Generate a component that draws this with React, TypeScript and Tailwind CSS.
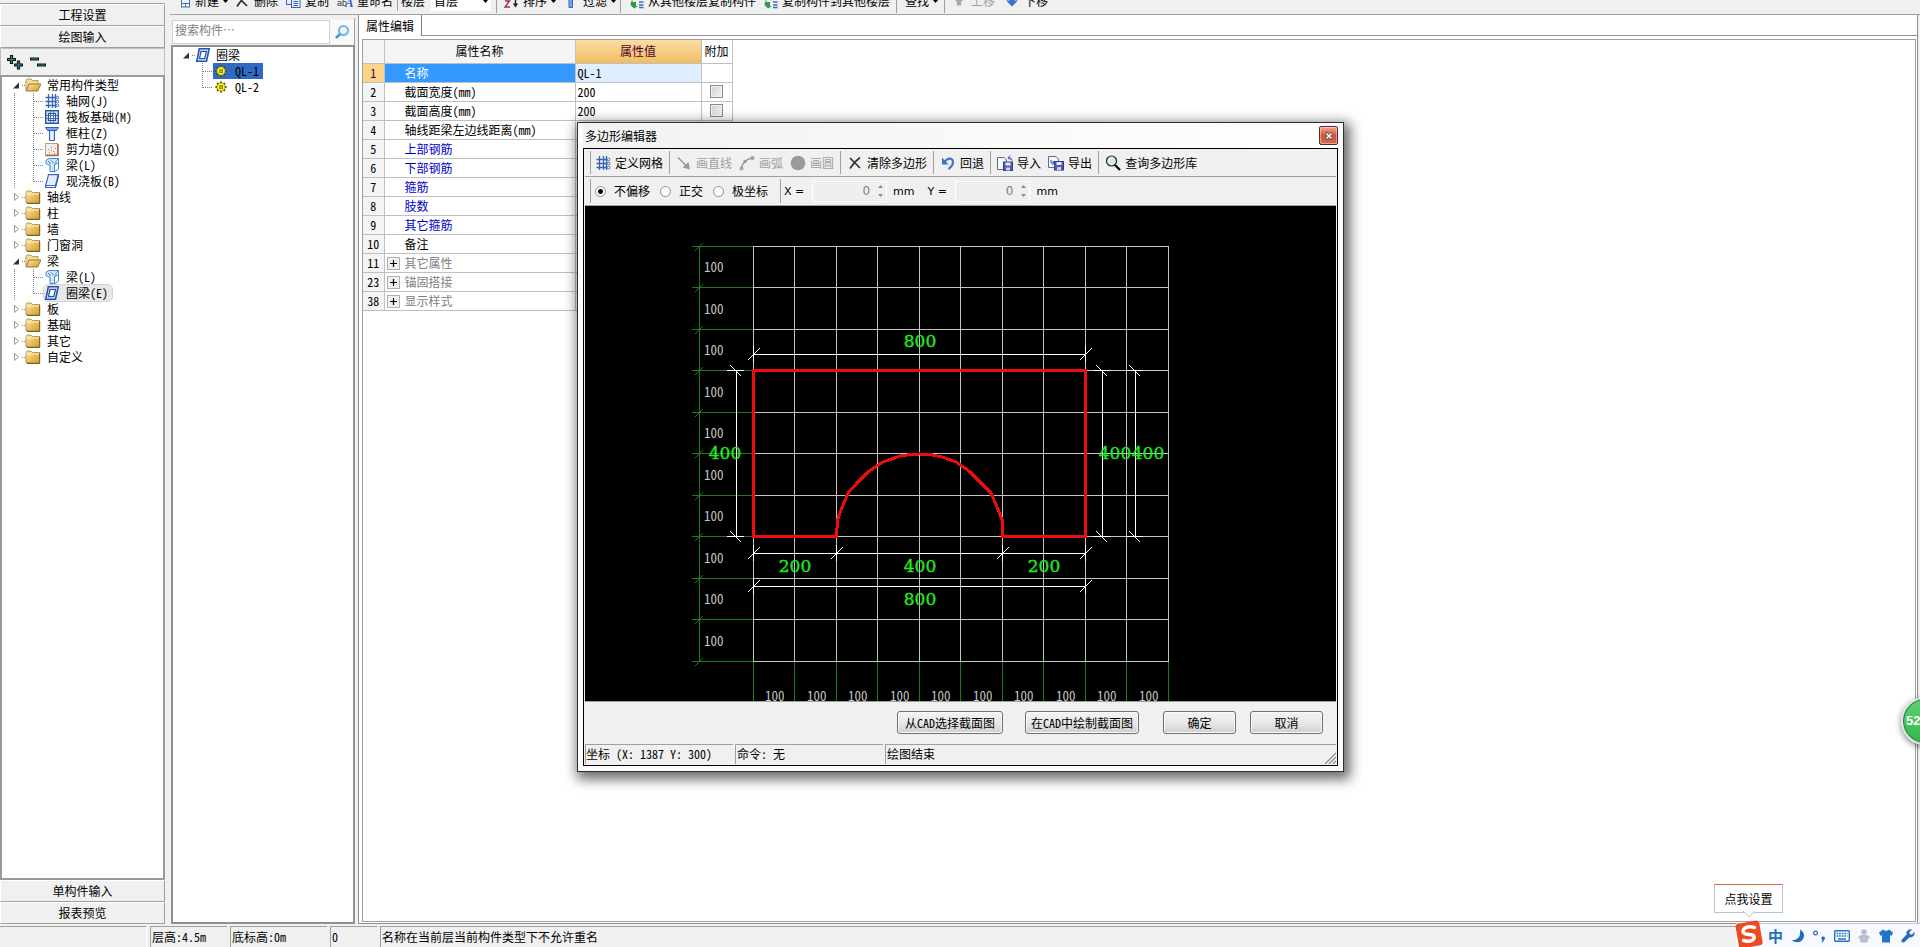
import React from 'react';

type IconName =
  | 'grid' | 'raft' | 'column' | 'wall' | 'beam' | 'slab' | 'ring' | 'gear'
  | 'folder' | 'folderOpen' | 'new' | 'cross' | 'copy' | 'rename' | 'sort' | 'filter'
  | 'floorCopy' | 'up' | 'down' | 'line' | 'arc' | 'circle' | 'undo' | 'import' | 'export'
  | 'search' | 'find';

const shapes: Record<IconName, React.ReactNode> = {
  grid: (
    <g fill="none" stroke="#3763b4" strokeWidth="1.3">
      <path d="M1.5 4.5H12M1.5 8.5H12M1.5 12.5H12M4.5 1V15M8.5 1V15M11.5 1V15" />
      <g strokeWidth="1"><circle cx="13.5" cy="4.5" r="1.3" fill="#fff" /><circle cx="13.5" cy="8.5" r="1.3" fill="#fff" /><circle cx="13.5" cy="12.5" r="1.3" fill="#fff" /></g>
    </g>
  ),
  raft: (
    <g fill="none" stroke="#2456a8">
      <rect x="1.7" y="1.7" width="12.6" height="12.6" fill="#dce8fb" strokeWidth="1.4" />
      <rect x="4.5" y="4.5" width="7" height="7" fill="#fff" strokeWidth="1.2" />
      <path d="M6.500 2V14M9.500 2V14M2 6.500H14M2 9.500H14" strokeWidth="0.700" />
      <rect x="6.500" y="6.500" width="3" height="3" fill="#fff" strokeWidth="0.800" />
    </g>
  ),
  column: (
    <g fill="#d5e4fb" stroke="#2b5cc0" strokeWidth="1">
      <path d="M5.5 5.5H10.5V15.5H5.5Z" /><path d="M1.5 2.5H14.5L12.5 5.5H3.5Z" fill="#7ea5e8" />
      <path d="M7.5 6.500V15" stroke="#fff" />
    </g>
  ),
  wall: (
    <g>
      <rect x="1.500" y="2.500" width="12" height="11.500" fill="#f6efe8" stroke="#b0a090" />
      <path d="M14 3V14.500H1.500" fill="none" stroke="#b06a48" strokeWidth="1.500" />
      <g fill="#a08878"><rect x="4" y="8" width="1" height="1" /><rect x="7" y="6" width="1" height="1" /><rect x="9" y="10" width="1" height="1" /><rect x="5" y="11" width="1" height="1" /><rect x="11" y="7" width="1" height="1" /><rect x="7" y="9" width="1" height="1" /><rect x="10" y="12" width="1" height="1" /></g>
    </g>
  ),
  beam: (
    <g fill="#cfe5fa" stroke="#3d86cf" strokeWidth="1">
      <path d="M2 3.500L5 1.500H14.500L12 4.500V6.500L10.500 8V14.500H6V8.500L2 6.500Z" />
      <path d="M10.500 8L14.500 5.500V12L10.500 15M4 4L7 7M7 3.500L10 6.500M14.500 1.500V5.500" fill="none" />
    </g>
  ),
  slab: (
    <g strokeWidth="1.200">
      <path d="M4.500 1.700H14.300L11.500 12.500H1.700Z" fill="#e6eefc" stroke="#3a6bc8" />
      <path d="M1.700 12.500V14.500H11.500L14.300 4V1.700" fill="none" stroke="#2f5db6" />
    </g>
  ),
  ring: (
    <g fill="none" stroke="#2354b0">
      <path d="M4.300 1.800H14.200L11.500 14.200H1.800Z" fill="#e8f0ff" strokeWidth="1.600" />
      <path d="M6 4.300H11.500L9.800 11.700H4.500Z" fill="#fff" strokeWidth="1.300" />
    </g>
  ),
  gear: (
    <g>
      <path d="M8 2.500V13.500M2.500 8H13.500M4.200 4.200L11.800 11.800M11.800 4.200L4.200 11.800" stroke="#3a3a00" strokeWidth="2" />
      <circle cx="8" cy="8" r="4.200" fill="#fff31a" stroke="#8a8600" strokeWidth="0.800" />
      <path d="M6 7H10M6 9.200H10M7 6V10M9.200 6V10" stroke="#5c5a00" strokeWidth="0.700" />
    </g>
  ),
  folder: (
    <g>
      <path d="M1 3.500L2 2H6L7.500 3.500H14.500V14H1Z" fill="url(#gold)" stroke="#a8873c" strokeWidth="0.800" />
      <path d="M1.500 5H14" stroke="#fdf0bf" />
      <path d="M14.700 4V14.400H2" stroke="#6e5a2c" fill="none" />
    </g>
  ),
  folderOpen: (
    <g>
      <path d="M1 3.500L2 2H6L7.500 3.500H13V13.500H1Z" fill="#f3dd92" stroke="#a8873c" strokeWidth="0.800" />
      <path d="M4 7H16L12.500 14H1.200Z" fill="url(#gold)" stroke="#8a6d2c" strokeWidth="0.900" />
    </g>
  ),
  new: (
    <g stroke="#3f6fb5"><rect x="6.500" y="1.500" width="8" height="12.500" fill="#f3f8ff" /><path d="M6.500 6.500H14.500M6.500 10.500H14.500M10.500 10.500V14" /></g>
  ),
  cross: <path d="M3 3L13 13M13 2.500Q7 7 3 13.500" fill="none" stroke="#333" strokeWidth="1.700" />,
  copy: (
    <g stroke="#3c62b0" fill="#e4edfc"><rect x="1.500" y="2.500" width="8" height="9" /><rect x="6.500" y="5.500" width="8.500" height="9" /><path d="M8.500 8.500H13M8.500 10.500H13M8.500 12.500H13" /></g>
  ),
  rename: (
    <g>
      <text x="0" y="13" fontSize="9" fontFamily="Liberation Sans" fill="#333">ab</text>
      <text x="8" y="14" fontSize="13" fontWeight="bold" fontStyle="italic" fontFamily="Liberation Serif" fill="#3763c4">A</text>
    </g>
  ),
  sort: (
    <g>
      <path d="M2 8H6.500L2 14H7" fill="none" stroke="#a03040" strokeWidth="1.400" />
      <path d="M12.500 2V13" stroke="#222" strokeWidth="1.400" /><path d="M9.800 10.500H15.200L12.500 14.500Z" fill="#222" />
    </g>
  ),
  filter: <path d="M2 2H13L9.500 7V14.500H6V7Z" fill="#7ba6ec" stroke="#3a5fae" />,
  floorCopy: (
    <g>
      <path d="M2 6.500H8M4 4V9" stroke="#888" />
      <path d="M3 9H8V13H10L6 15.500L2.500 12Z" fill="#2ba03c" />
      <path d="M11 3H15.500M11 6H15.500M11 9H15.500M11 12H15.500M11 14.500H15.500" stroke="#3f70bd" strokeWidth="1.600" />
    </g>
  ),
  up: <path d="M8 3L12 8H10.200V12.500H5.800V8H4Z" fill="#a8a8a8" />,
  down: <path d="M5.500 3H10.500V7.500H14L8 13.500L2 7.500H5.500Z" fill="#3f6fd0" />,
  line: <g stroke="#9a9a9a" fill="#9a9a9a"><path d="M2 2.500L11 11.500" strokeWidth="1.600" /><path d="M14 14.500L6.500 12.500L12.500 7Z" stroke="none" /></g>,
  arc: (
    <g fill="none" stroke="#9a9a9a" strokeWidth="1.500"><path d="M2.500 13Q4 5 13 3" /><circle cx="13.500" cy="3" r="1.200" /><circle cx="2.500" cy="13.500" r="1.200" /><circle cx="6" cy="6.500" r="1" /></g>
  ),
  circle: <circle cx="8" cy="8" r="7.300" fill="#9a9a9a" />,
  undo: (
    <g><path d="M4.500 6.500Q10 1.500 12.500 5Q14.500 9.500 8.500 14" fill="none" stroke="#3f72cc" strokeWidth="2.200" /><path d="M2 2.500V9.500H8.500Z" fill="#3f72cc" /></g>
  ),
  import: (
    <g>
      <path d="M0.500 2.500H7L9.500 5V14.500H0.500Z" fill="#f4f7fc" stroke="#5c6c90" />
      <rect x="6.500" y="7" width="9" height="8.500" fill="#4d5fb4" stroke="#323f80" /><rect x="8.500" y="7.500" width="5" height="3" fill="#e8ecfa" /><rect x="9" y="12.500" width="4" height="3" fill="#c8d0ee" />
      <path d="M13 0.500L11 3L13.500 4.500M11 3Q14.500 2 15 5.500" fill="none" stroke="#3e56a4" />
    </g>
  ),
  export: (
    <g>
      <path d="M0.500 1.500H8L10.500 4V12.500H0.500Z" fill="#f4f7fc" stroke="#5c6c90" />
      <path d="M3 5V8H6L4.500 6M6 8L4.500 10" fill="none" stroke="#3e56a4" />
      <rect x="6.500" y="6.500" width="9" height="8.500" fill="#4d5fb4" stroke="#323f80" /><rect x="8.500" y="7" width="5" height="3" fill="#e8ecfa" /><rect x="9" y="12" width="4" height="3" fill="#c8d0ee" />
    </g>
  ),
  search: (
    <g><circle cx="6.500" cy="6" r="5" fill="#d8eef4" stroke="#222" strokeWidth="1.200" /><path d="M10 10L15 15" stroke="#111" strokeWidth="2.400" /></g>
  ),
  find: (
    <g><circle cx="9.500" cy="6.500" r="4.500" fill="#eef8ff" stroke="#6db4e8" strokeWidth="2" /><path d="M6 10L2 14" stroke="#4a9cdc" strokeWidth="2.600" /></g>
  ),
};

function Icon({ name }: { name: IconName }) {
  return (
    <svg viewBox="0 0 16 16" className="size-4 shrink-0" aria-hidden="true">
      {shapes[name]}
    </svg>
  );
}

function ToolButton({ icon, label, menu, disabled, className = '' }: {
  icon?: IconName; label: string; menu?: boolean; disabled?: boolean; className?: string;
}) {
  return (
    <button type="button" disabled={disabled} className={`flex shrink-0 items-center gap-1 whitespace-nowrap disabled:text-[#a0a0a0] ${className}`}>
      {icon && <Icon name={icon} />}
      {label}
      {menu && <svg viewBox="0 0 5 3" className="h-[3px] w-[5px]" aria-hidden="true"><path d="M0 0H5L2.500 3Z" fill="#000" /></svg>}
    </button>
  );
}

function MainToolbar() {
  return (
    <div className="h-[15px] shrink-0 overflow-hidden border-b border-[#a0a0a0]">
      <div className="-mt-3 flex h-[26px] items-center pl-[5px]">
        <ToolButton icon="new" label="新建" menu className="w-[59px]" />
        <ToolButton icon="cross" label="删除" className="w-[51px]" />
        <ToolButton icon="copy" label="复制" className="w-[52px]" />
        <ToolButton icon="rename" label="重命名" className="w-[60px]" />
        <label className="flex items-center border-l border-[#a0a0a0] pl-[3px]">
          楼层
          <span className="relative ml-[6px] flex items-center">
            <select className="h-[20px] w-[60px] appearance-none bg-white pl-[3px]" defaultValue="首层"><option>首层</option></select>
            <svg viewBox="0 0 5 3" className="absolute right-[3px] h-[3px] w-[5px]" aria-hidden="true"><path d="M0 0H5L2.500 3Z" fill="#000" /></svg>
          </span>
        </label>
        <div className="ml-[5px] h-6 w-px bg-[#a0a0a0]" />
        <ToolButton icon="sort" label="排序" menu className="ml-[6px] w-[60px]" />
        <ToolButton icon="filter" label="过滤" menu className="w-[57px]" />
        <div className="h-6 w-px bg-[#a0a0a0]" />
        <ToolButton icon="floorCopy" label="从其他楼层复制构件" className="ml-[7px] w-[134px]" />
        <ToolButton icon="floorCopy" label="复制构件到其他楼层" className="w-[134px]" />
        <div className="h-6 w-px bg-[#a0a0a0]" />
        <ToolButton label="查找" menu className="ml-2 w-[39px]" />
        <div className="h-6 w-px bg-[#a0a0a0]" />
        <ToolButton icon="up" label="上移" disabled className="ml-[6px] w-[53px]" />
        <ToolButton icon="down" label="下移" />
      </div>
    </div>
  );
}

type Child = { icon: IconName; label: string; selected?: boolean };
type Group = { label: string; children?: Child[] };

const groups: Group[] = [
  {
    label: '常用构件类型',
    children: [
      { icon: 'grid', label: '轴网(J)' },
      { icon: 'raft', label: '筏板基础(M)' },
      { icon: 'column', label: '框柱(Z)' },
      { icon: 'wall', label: '剪力墙(Q)' },
      { icon: 'beam', label: '梁(L)' },
      { icon: 'slab', label: '现浇板(B)' },
    ],
  },
  { label: '轴线' },
  { label: '柱' },
  { label: '墙' },
  { label: '门窗洞' },
  { label: '梁', children: [{ icon: 'beam', label: '梁(L)' }, { icon: 'ring', label: '圈梁(E)', selected: true }] },
  { label: '板' },
  { label: '基础' },
  { label: '其它' },
  { label: '自定义' },
];

function Expander({ open }: { open: boolean }) {
  return (
    <svg viewBox="0 0 14 16" className="h-4 w-[14px] shrink-0" aria-hidden="true">
      {open ? <path d="M2 11.500H8V5.500Z" fill="#333" /> : <path d="M3.500 4.500L7.500 8L3.500 11.500Z" fill="#fff" stroke="#9a9a9a" />}
      <path d="M11 8.500H14" stroke="#808080" strokeDasharray="1 1" />
    </svg>
  );
}

function Branch({ last, trunk }: { last: boolean; trunk: boolean }) {
  return (
    <svg viewBox="0 0 32 16" className="h-4 w-8 shrink-0" shapeRendering="crispEdges" aria-hidden="true">
      <path d={`${trunk ? 'M2.500 0V16' : ''}M21.500 0V${last ? 9 : 16}M21.500 8.500H31`} fill="none" stroke="#808080" strokeDasharray="1 1" />
    </svg>
  );
}

function TypeTree() {
  return (
    <ul>
      {groups.map((g) => (
        <li key={g.label}>
          <button type="button" className="flex h-4 items-center pl-[9px]">
            <Expander open={!!g.children} />
            <Icon name={g.children ? 'folderOpen' : 'folder'} />
            <span className="pl-[6px]">{g.label}</span>
          </button>
          {g.children && (
            <ul>
              {g.children.map((c, i) => (
                <li key={c.label} className="flex h-4 items-center pl-[10px]">
                  <Branch trunk last={i === g.children!.length - 1} />
                  <button type="button" className={`flex h-4 items-center rounded-sm pr-1 ${c.selected ? 'bg-[#e8e8e8] outline outline-1 outline-[#d4d4d4]' : ''}`}>
                    <Icon name={c.icon} />
                    <span className="pl-[6px]">{c.label}</span>
                  </button>
                </li>
              ))}
            </ul>
          )}
        </li>
      ))}
    </ul>
  );
}

function NavButton({ label }: { label: string }) {
  return (
    <button type="button" className="h-[22px] w-full shrink-0 border border-l-white border-t-white border-b-[#a0a0a0] border-r-[#a0a0a0]">
      {label}
    </button>
  );
}

function Sidebar() {
  return (
    <aside className="flex w-[165px] shrink-0 flex-col">
      <div className="h-1 shrink-0 border-b border-[#a0a0a0]" />
      <NavButton label="工程设置" />
      <NavButton label="绘图输入" />
      <div className="flex h-[27px] shrink-0 items-center border border-b-0 border-[#c0c0c0] pl-[5px]">
        <button type="button" aria-label="展开">
          <svg viewBox="0 0 18 16" className="h-4 w-[18px]"><path d="M5.500 1V10M1 5.500H10M12.500 6.500V15.500M8 11H17" stroke="#111" strokeWidth="3.200" /><path d="M5.500 2V9M2 5.500H9M12.500 7.500V14.500M9 11H16" stroke="#1f8f7a" strokeWidth="1.200" /></svg>
        </button>
        <button type="button" className="ml-[5px]" aria-label="折叠">
          <svg viewBox="0 0 18 16" className="h-4 w-[18px]"><path d="M1 5H10M8 11H17" stroke="#111" strokeWidth="3.200" /><path d="M2 5H9M9 11H16" stroke="#1f8f7a" strokeWidth="1.200" /></svg>
        </button>
      </div>
      <div className="min-h-0 flex-1 border-2 border-[#9a9a9a] bg-white">
        <TypeTree />
      </div>
      <NavButton label="单构件输入" />
      <NavButton label="报表预览" />
    </aside>
  );
}

function ComponentPanel() {
  return (
    <section className="flex w-[185px] shrink-0 flex-col pl-px">
      <div className="mt-[3px] flex h-[27px] shrink-0 items-center border-r border-[#a0a0a0] pl-px">
        <input aria-label="搜索构件" placeholder="搜索构件…" className="h-6 w-[158px] border border-[#c8d4dc] bg-white px-[2px] pb-1 placeholder:text-[#808080]" />
        <button type="button" aria-label="搜索" className="flex h-6 flex-1 items-center justify-center bg-white/60"><Icon name="find" /></button>
      </div>
      <ul className="min-h-0 flex-1 border-2 border-[#909090] bg-white">
        <li>
          <button type="button" className="flex h-4 items-center pl-2">
            <Expander open />
            <Icon name="ring" />
            <span className="pl-[5px]">圈梁</span>
          </button>
          <ul>
            {['QL-1', 'QL-2'].map((n, i) => (
              <li key={n} className="flex h-4 items-center pl-2">
                <Branch trunk={false} last={i === 1} />
                <button type="button" className={`flex h-4 items-center pr-1 ${i === 0 ? 'bg-[#316ac5]' : ''}`}>
                  <Icon name="gear" />
                  <span className="pl-[6px]">{n}</span>
                </button>
              </li>
            ))}
          </ul>
        </li>
      </ul>
    </section>
  );
}

type Prop = { no: number; name: string; value?: string; check?: boolean; tone?: 'blue' | 'group' };

const props: Prop[] = [
  { no: 1, name: '名称', value: 'QL-1' },
  { no: 2, name: '截面宽度(mm)', value: '200', check: true },
  { no: 3, name: '截面高度(mm)', value: '200', check: true },
  { no: 4, name: '轴线距梁左边线距离(mm)' },
  { no: 5, name: '上部钢筋', tone: 'blue' },
  { no: 6, name: '下部钢筋', tone: 'blue' },
  { no: 7, name: '箍筋', tone: 'blue' },
  { no: 8, name: '肢数', tone: 'blue' },
  { no: 9, name: '其它箍筋', tone: 'blue' },
  { no: 10, name: '备注' },
  { no: 11, name: '其它属性', tone: 'group' },
  { no: 23, name: '锚固搭接', tone: 'group' },
  { no: 38, name: '显示样式', tone: 'group' },
];

function PropertyTable() {
  return (
    <table className="table-fixed border-collapse">
      <colgroup>
        <col className="w-[21px]" /><col className="w-[191px]" /><col className="w-[126px]" /><col className="w-[31px]" />
      </colgroup>
      <thead>
        <tr className="h-[23px] bg-[#f4f4f4]">
          <th className="border-r border-b border-[#c0c0c0]" />
          <th className="border-r border-b border-[#c0c0c0] font-normal">属性名称</th>
          <th className="border-r border-b border-[#c0c0c0] bg-linear-to-b from-[#fbdba2] to-[#f0bd62] font-normal text-[#500030]">属性值</th>
          <th className="border-r border-b border-[#c0c0c0] bg-white font-normal">附加</th>
        </tr>
      </thead>
      <tbody>
        {props.map((p) => (
          <tr key={p.no} className="h-[19px]">
            <td className={`border-r border-b border-[#c0c0c0] p-0 text-center leading-4 ${p.no === 1 ? 'bg-[#fbd48a] text-[#500030]' : 'bg-[#f4f4f4]'}`}>{p.no}</td>
            <td className={`border-r border-b border-[#c0c0c0] p-0 leading-4 ${p.no === 1 ? 'bg-[#3399ff] text-white' : p.tone === 'blue' ? 'text-[#0000c8]' : p.tone === 'group' ? 'text-[#808080]' : ''}`}>
              <div className="flex items-center pt-px whitespace-nowrap">
                <span className="flex w-5 shrink-0 pl-[2px]">
                  {p.tone === 'group' && (
                    <button type="button" aria-label={`展开${p.name}`} className="flex size-[13px] items-center justify-center border border-[#b0b0b0] bg-[#f0f0f0]">
                      <svg viewBox="0 0 9 9" className="size-[9px]"><path d="M4.500 1V8M1 4.500H8" stroke="#000" strokeWidth="1.200" /></svg>
                    </button>
                  )}
                </span>
                {p.name}
              </div>
            </td>
            <td className={`border-r border-b border-[#c0c0c0] p-0 pl-[2px] leading-4 ${p.no === 1 ? 'bg-[#dfefff]' : ''}`}>{p.value}</td>
            <td className="border-r border-b border-[#c0c0c0] p-0">
              {p.check && <input type="checkbox" aria-label={`${p.name}附加`} className="mx-auto block size-[13px] appearance-none border border-[#8a8a8a] bg-linear-to-br from-[#d0d0d0] to-[#f6f6f6] shadow-[inset_0_0_0_1px_#f4f4f4]" />}
            </td>
          </tr>
        ))}
      </tbody>
    </table>
  );
}

function PropertyPanel() {
  return (
    <section className="ml-[3px] mr-[2px] flex min-w-0 flex-1 flex-col border-x border-b border-[#909090] bg-white">
      <div className="flex h-[21px] shrink-0">
        <button type="button" className="h-full w-[63px] border-r border-[#808080]">属性编辑</button>
        <div className="flex-1 border-b border-[#909090]" />
      </div>
      <div className="m-[3px] mr-px mb-px min-h-0 flex-1 border border-[#a0a0a0]">
        <PropertyTable />
      </div>
    </section>
  );
}

function StatusBar() {
  return (
    <footer className="flex h-[23px] shrink-0 gap-[3px] pt-[2px] leading-5">
      <div className="w-[147px] border-t border-r border-t-[#a0a0a0] border-r-white" />
      <div className="w-[77px] border-t border-l border-[#a0a0a0] pl-px">层高:4.5m</div>
      <div className="w-[97px] border-t border-l border-[#a0a0a0] pl-px">底标高:0m</div>
      <div className="w-[47px] border-t border-l border-[#a0a0a0] pl-px">0</div>
      <div className="flex-1 border-t border-l border-[#a0a0a0] pl-px">名称在当前层当前构件类型下不允许重名</div>
    </footer>
  );
}

const gx = [753, 794, 836, 877, 919, 960, 1002, 1043, 1085, 1126, 1168];
const gy = [246, 287, 329, 370, 412, 453, 495, 536, 578, 619, 661];
const arch =
  '1002.500,536.500 1002.500,521 997,507 991,493 969,471 956,462 942,457 930,454.500 919.500,454 910,454.500 900,456 883,462 869,471 858,482 848,493 841,510 837.500,520 836.500,536.500';

function SectionCanvas() {
  const hDims: [number, number[]][] = [[354, [753, 1085]], [553, [753, 836, 1002, 1085]], [586, [753, 1085]]];
  const labels: [string, number, number][] = [
    ['800', 920, 347], ['400', 725, 459], ['400', 1115, 459], ['400', 1148, 459],
    ['200', 795, 572], ['400', 920, 572], ['200', 1044, 572], ['800', 920, 605],
  ];
  return (
    <svg viewBox="585 206 751 495" className="block w-full bg-black" role="img" aria-label="截面图">
      <g shapeRendering="crispEdges" strokeWidth="1" fill="none">
        <g stroke="#1c7a1c">
          <path d="M699.500 246V661" />
          {gy.map((y) => <path key={y} d={`M692 ${y}.500H753`} />)}
          {gx.map((x) => <path key={x} d={`M${x}.500 661V701`} />)}
        </g>
        <g stroke="#1c7a1c" shapeRendering="auto">
          {gy.map((y) => <path key={y} d={`M695 ${y + 5}L703 ${y - 3}`} />)}
        </g>
        <g stroke="#c4c4c4">
          {gy.map((y) => <path key={y} d={`M753 ${y}.500H1169`} />)}
          {gx.map((x) => <path key={x} d={`M${x}.500 246V661`} />)}
        </g>
        <g stroke="#fff">
          {hDims.map(([y, xs]) => (
            <g key={y}>
              <path d={`M${xs[0]} ${y}.500H${xs[xs.length - 1]}`} />
              {xs.map((x) => <path key={x} d={`M${x}.500 ${y - 8}V${y + 8}M${x - 5} ${y + 6}L${x + 7} ${y - 6}`} />)}
            </g>
          ))}
          {[736, 1102, 1135].map((x) => (
            <path key={x} d={`M${x}.500 370V536M${x - 9} 370.500H${x + 8}M${x - 9} 536.500H${x + 8}M${x - 6} 365L${x + 5} 376M${x - 6} 531L${x + 5} 542`} />
          ))}
        </g>
      </g>
      <polygon points={`753.500,370.500 1085.500,370.500 1085.500,536.500 ${arch} 753.500,536.500`} fill="none" stroke="#ee0d0d" strokeWidth="3" shapeRendering="crispEdges" />
      <g fontFamily="'Noto Sans Mono CJK SC', 'Liberation Mono', monospace" fontSize="13" fill="#c4c4c4">
        {gy.slice(1).map((y) => <text key={y} x="704" y={y - 15}>100</text>)}
        {gx.slice(1).map((x) => <text key={x} x={x - 29} y="701">100</text>)}
      </g>
      <g fontFamily="'DejaVu Serif', serif" fontSize="17" fill="#22e622" stroke="#22e622" strokeWidth="0.400" textAnchor="middle">
        {labels.map(([t, x, y]) => <text key={`${x}-${y}`} x={x} y={y}>{t}</text>)}
      </g>
    </svg>
  );
}

function Separator() {
  return <div className="ml-[6px] h-[23px] w-px bg-[#a0a0a0]" />;
}

function CoordField({ id, label }: { id: string; label: string }) {
  return (
    <div className="flex items-center font-['DejaVu_Sans',sans-serif] text-[11px]">
      <label htmlFor={id} className="w-7 pt-px whitespace-nowrap">{label}</label>
      <span className="flex h-[21px] w-[75px] items-center border border-white bg-[#efefef]">
        <input id={id} disabled defaultValue="0" className="w-[57px] text-right text-xs text-[#808080]" />
        <svg viewBox="0 0 8 14" className="ml-[7px] h-[14px] w-2" aria-hidden="true"><path d="M1 4H6L3.500 1ZM1 10H6L3.500 13Z" fill="#8a8a8a" /></svg>
      </span>
      <span className="ml-[6px] pt-px">mm</span>
    </div>
  );
}

function ModeRadio({ label, checked }: { label: string; checked?: boolean }) {
  return (
    <label className="flex items-center gap-[8px] whitespace-nowrap">
      <input type="radio" name="mode" defaultChecked={checked} className="size-[11px] appearance-none rounded-full border border-[#8e8f8f] bg-white checked:bg-[radial-gradient(circle,#000_0_2px,#fff_3px)]" />
      {label}
    </label>
  );
}

function FooterButton({ label, className }: { label: string; className: string }) {
  return (
    <button type="button" className={`h-[23px] whitespace-nowrap rounded-[3px] border border-[#707070] bg-linear-to-b from-[#f4f4f4] via-[#e8e8e8] to-[#cfcfcf] shadow-[inset_0_0_0_1px_#fafafa] ${className}`}>
      {label}
    </button>
  );
}

function PolygonDialog() {
  return (
    <div role="dialog" aria-label="多边形编辑器" className="absolute top-[122px] left-[577px] w-[767px] border border-[#303030] bg-[#fbfbfb] px-[5px] pb-[5px] shadow-[3px_4px_12px_3px_rgba(0,0,0,0.6)]">
      <div className="flex h-[25px] items-center justify-between bg-linear-to-r from-[#f2f2f2] to-white pl-[2px]">
        <h1>多边形编辑器</h1>
        <button type="button" aria-label="关闭" className="flex h-[19px] w-[19px] items-center justify-center rounded-xs border border-[#5a2a26] bg-linear-to-b from-[#eca594] via-[#d4543c] to-[#d96a4c] shadow-[inset_0_0_0_1px_rgba(255,255,255,0.4)]">
          <svg viewBox="0 0 8 8" className="size-2"><path d="M1 1L7 7M7 1L1 7" stroke="#444" strokeWidth="3" /><path d="M1.500 1.500L6.500 6.500M6.500 1.500L1.500 6.500" stroke="#fff" strokeWidth="1.700" /></svg>
        </button>
      </div>
      <div className="border border-black bg-[#f0f0f0] px-px pb-px">
        <div className="flex h-7 items-center border-b border-[#a0a0a0] pl-[5px]">
          <div className="h-[23px] w-px bg-[#a0a0a0]" />
          <ToolButton icon="grid" label="定义网格" className="ml-[4px]" />
          <Separator />
          <ToolButton icon="line" label="画直线" disabled className="ml-[6px]" />
          <ToolButton icon="arc" label="画弧" disabled className="ml-[7px]" />
          <ToolButton icon="circle" label="画圆" disabled className="ml-[7px]" />
          <Separator />
          <ToolButton icon="cross" label="清除多边形" className="ml-[6px]" />
          <Separator />
          <ToolButton icon="undo" label="回退" className="ml-[6px]" />
          <Separator />
          <ToolButton icon="import" label="导入" className="ml-[6px]" />
          <ToolButton icon="export" label="导出" className="ml-[7px]" />
          <Separator />
          <ToolButton icon="search" label="查询多边形库" className="ml-[6px]" />
        </div>
        <div className="flex h-[29px] items-center border-b border-[#a0a0a0] pl-[5px]">
          <div className="h-6 w-px bg-[#a0a0a0]" />
          <fieldset className="ml-1 flex gap-[10px]">
            <ModeRadio label="不偏移" checked />
            <ModeRadio label="正交" />
            <ModeRadio label="极坐标" />
          </fieldset>
          <div className="ml-3 h-6 w-px bg-[#a0a0a0]" />
          <div className="ml-[3px] flex gap-[13px]">
            <CoordField id="coord-x" label="X =" />
            <CoordField id="coord-y" label="Y =" />
          </div>
        </div>
        <SectionCanvas />
        <div className="flex justify-end border-t border-[#a0a0a0] px-[13px] pt-[9px] pb-[10px]">
          <FooterButton label="从CAD选择截面图" className="w-[106px]" />
          <FooterButton label="在CAD中绘制截面图" className="ml-[22px] w-[114px]" />
          <FooterButton label="确定" className="ml-6 w-[73px]" />
          <FooterButton label="取消" className="ml-[14px] w-[73px]" />
        </div>
        <div className="flex h-5 gap-[2px] leading-[18px]">
          <div className="w-[148px] border-t border-l border-[#a0a0a0] whitespace-pre">坐标 (X: 1387 Y: 300)</div>
          <div className="w-[148px] border-t border-l border-[#a0a0a0] pl-px">命令: 无</div>
          <div className="flex flex-1 justify-between border-t border-l border-[#a0a0a0] pl-px">
            绘图结束
            <svg viewBox="0 0 12 12" className="size-3 self-end" aria-hidden="true"><path d="M1 12L12 1M5 12L12 5M9 12L12 9" stroke="#8a8a8a" strokeWidth="1.200" /></svg>
          </div>
        </div>
      </div>
    </div>
  );
}

function ImeBar() {
  return (
    <div className="absolute right-0 bottom-0 flex h-6 w-[184px] items-center border-t border-[#b8c8d8] bg-[#f6fafe] pl-8 text-[#1f6fc0]">
      <svg viewBox="0 0 28 28" className="absolute -top-[4px] -left-px size-7" aria-hidden="true">
        <g transform="rotate(-10 14 14)"><rect x="2" y="2" width="24" height="25" rx="3" fill="#ee4a20" /><path d="M20.500 8.500Q14 5.500 10 8Q6.500 11 11 13.500L17 15.500Q20.500 18 16.500 20.500Q12.500 22 7.500 19.500" fill="none" stroke="#fff" strokeWidth="3.600" strokeLinecap="round" /></g>
      </svg>
      <button type="button" className="text-[15px] leading-none font-bold">中</button>
      <svg viewBox="0 0 16 16" className="ml-[7px] size-4" aria-hidden="true"><path d="M10 1.500Q16 5.500 13 11Q9 16.500 1.500 12.500Q11.500 12 10 1.500Z" fill="#2467c4" /></svg>
      <svg viewBox="0 0 14 16" className="ml-[6px] h-4 w-[14px]" aria-hidden="true"><circle cx="3.500" cy="5" r="1.900" fill="none" stroke="#2467c4" strokeWidth="1.200" /><path d="M10 8.500Q14 8 12.500 11.500Q11.500 14 9.500 14.500L10.500 12Q8.500 11.500 10 8.500Z" fill="#2467c4" /></svg>
      <svg viewBox="0 0 16 12" className="ml-2 h-3 w-4" aria-hidden="true"><rect x="0.700" y="0.700" width="14.600" height="10.600" rx="1" fill="#fff" stroke="#2472c4" strokeWidth="1.400" /><path d="M2.500 3.500H13.500M2.500 6H13.500" stroke="#2472c4" strokeWidth="1.500" strokeDasharray="1.700 0.900" /><path d="M4 9H12" stroke="#2472c4" strokeWidth="1.500" /></svg>
      <svg viewBox="0 0 12 14" className="ml-2 h-[14px] w-3" aria-hidden="true"><circle cx="6" cy="3" r="2.800" fill="#b8bfd2" /><path d="M0 9Q1 6 4 6H8Q11 6 12 9L10 10V13Q6 14.500 2 13V10Z" fill="#b8bfd2" /></svg>
      <svg viewBox="0 0 14 14" className="ml-[9px] size-[14px]" aria-hidden="true"><path d="M4 0.500Q7 3 10 0.500L14 3.500L12.500 7L11 6V13.500H3V6L1.500 7L0 3.500Z" fill="#1f76c8" /></svg>
      <svg viewBox="0 0 14 14" className="ml-2 size-[14px]" aria-hidden="true"><path d="M13.500 3L11 5.500L8.700 5.300L8.500 3L11 0.500Q7 -0.500 5.500 3Q5.300 4.500 5.700 5.500L0.500 11Q0 14 3 13.500L8.500 8.300Q11 8.800 12.500 7Q14 5.500 13.500 3Z" fill="#2467c4" /></svg>
    </div>
  );
}

export default function App() {
  return (
    <div className="relative flex h-screen flex-col overflow-hidden bg-[#f0f0f0] font-['Noto_Sans_Mono_CJK_SC','Noto_Sans_CJK_SC',sans-serif] text-xs leading-4 text-black">
      <svg className="absolute size-0" aria-hidden="true">
        <defs><linearGradient id="gold" x1="0" y1="0" x2="1" y2="1"><stop offset="0" stopColor="#fdeaa6" /><stop offset="1" stopColor="#d9991f" /></linearGradient></defs>
      </svg>
      <div className="flex min-h-0 flex-1">
        <Sidebar />
        <div className="ml-[5px] flex min-w-0 flex-1 flex-col">
          <MainToolbar />
          <main className="flex min-h-0 flex-1">
            <ComponentPanel />
            <PropertyPanel />
          </main>
        </div>
      </div>
      <StatusBar />
      <PolygonDialog />
      <button type="button" className="absolute top-[697px] -right-[29px] size-12 rounded-full border-2 border-[#e0e0e0] bg-linear-to-b from-[#5fd070] to-[#2fb84e] pl-[3px] text-left font-['Liberation_Sans',sans-serif] text-[13px] font-bold text-white shadow-[0_2px_6px_rgba(0,0,0,0.5),inset_0_0_0_1px_#1c8040]">52</button>
      <div className="absolute right-[137px] bottom-[34px] flex h-[29px] w-[69px] items-center justify-center border border-t-[#d86a40] border-[#b8c4d4] bg-white">
        点我设置
        <svg viewBox="0 0 12 7" className="absolute -bottom-[6px] left-[28px] h-[7px] w-3" aria-hidden="true"><path d="M0 0L6 6L12 0" fill="#fff" stroke="#b8c4d4" /></svg>
      </div>
      <ImeBar />
    </div>
  );
}
